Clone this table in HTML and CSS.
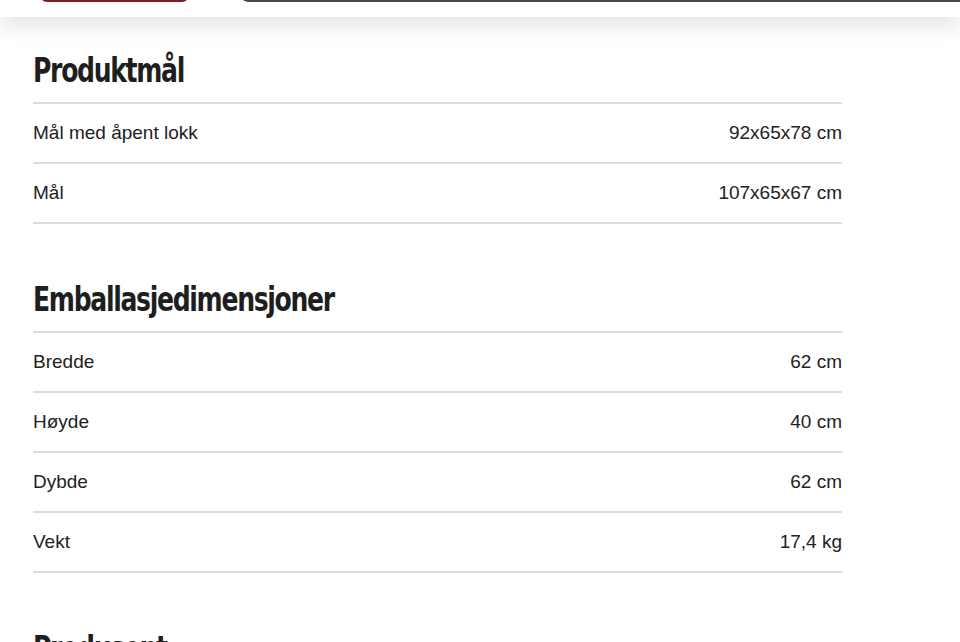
FILE: index.html
```html
<!DOCTYPE html>
<html lang="no">
<head>
<meta charset="utf-8">
<title>Produktmål</title>
<link rel="stylesheet" href="styles.css">
</head>
<body>
<header class="topbar">
  <div class="topbar-btn"></div>
  <div class="topbar-search"></div>
</header>
<main class="specs">
  <section class="spec-section first">
    <h2 class="spec-title">Produktmål</h2>
    <div class="spec-table">
      <div class="spec-row"><span>Mål med åpent lokk</span><span>92x65x78 cm</span></div>
      <div class="spec-row"><span>Mål</span><span>107x65x67 cm</span></div>
    </div>
  </section>
  <section class="spec-section">
    <h2 class="spec-title">Emballasjedimensjoner</h2>
    <div class="spec-table">
      <div class="spec-row"><span>Bredde</span><span>62 cm</span></div>
      <div class="spec-row"><span>Høyde</span><span>40 cm</span></div>
      <div class="spec-row"><span>Dybde</span><span>62 cm</span></div>
      <div class="spec-row"><span>Vekt</span><span>17,4 kg</span></div>
    </div>
  </section>
  <section class="spec-section">
    <h2 class="spec-title">Produsent</h2>
  </section>
</main>
</body>
</html>
```
FILE: styles.css
```css
html, body {
  margin: 0;
  padding: 0;
  background: #fff;
}
body {
  font-family: "Liberation Sans", Arial, sans-serif;
  color: #222;
  overflow: hidden;
  height: 642px;
}
.topbar {
  position: relative;
  z-index: 2;
  height: 17px;
  background: #fff;
  display: flex;
  align-items: flex-end;
  overflow: hidden;
  box-shadow: 0 6px 22px rgba(0, 0, 0, 0.16);
}
.topbar-btn {
  margin-left: 40px;
  margin-bottom: 15px;
  width: 149px;
  height: 40px;
  flex: none;
  box-sizing: border-box;
  border: 2px solid #7d1c25;
  border-radius: 7px;
  background: #9b1f2b;
}
.topbar-search {
  margin-left: 53px;
  margin-bottom: 15px;
  flex: 1;
  height: 40px;
  box-sizing: border-box;
  border: 2px solid #4a4a4a;
  border-right: none;
  border-radius: 6px 0 0 6px;
  background: #fff;
}
.specs {
  padding: 0 118px 0 33px;
}
.spec-section {
  margin-top: 45px;
}
.spec-section.first {
  margin-top: 23px;
}
.spec-title {
  margin: 0;
  height: 62px;
  font-family: "DejaVu Sans Condensed", "DejaVu Sans", sans-serif;
  font-stretch: condensed;
  font-weight: bold;
  font-size: 34px;
  line-height: 60px;
  letter-spacing: -1.6px;
  color: #1e1e1e;
  transform: scaleX(0.82);
  transform-origin: left center;
}
.spec-table {
  border-top: 2px solid #dcdcdc;
}
.spec-row {
  display: flex;
  justify-content: space-between;
  align-items: center;
  height: 58px;
  border-bottom: 2px solid #dcdcdc;
  font-size: 19px;
  color: #222;
}
```
